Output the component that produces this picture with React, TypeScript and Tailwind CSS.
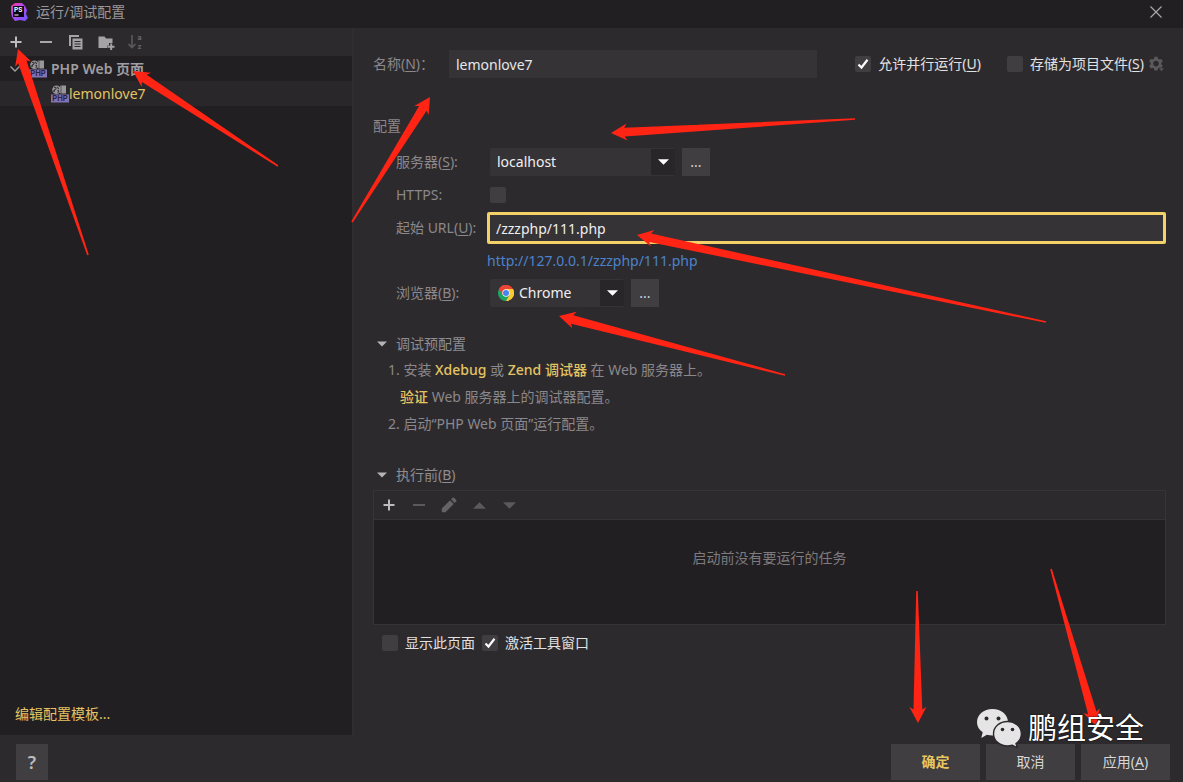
import React from "react";

type Point = [number, number];

const ARROWS: { from: Point; to: Point }[] = [
  { from: [88, 255], to: [18, 49] },
  { from: [278, 166], to: [133, 71] },
  { from: [352, 222], to: [430, 97] },
  { from: [855, 119], to: [611, 133] },
  { from: [1046, 322], to: [637, 235] },
  { from: [785, 375], to: [559, 316] },
  { from: [917, 591], to: [918, 723] },
  { from: [1051, 569], to: [1096, 726] },
];

function arrowPoints(from: Point, to: Point): string {
  const dx = to[0] - from[0];
  const dy = to[1] - from[1];
  const len = Math.hypot(dx, dy);
  const ux = dx / len;
  const uy = dy / len;
  const at = (back: number, side: number) =>
    `${(to[0] - ux * back - uy * side).toFixed(1)},${(to[1] - uy * back + ux * side).toFixed(1)}`;
  return [
    at(0, 0),
    at(16, 8.5),
    at(13.5, 4.4),
    at(len, 0.8),
    at(len, -0.8),
    at(13.5, -4.4),
    at(16, -8.5),
  ].join(" ");
}

function Arrows() {
  return (
    <svg
      className="pointer-events-none absolute left-0 top-0"
      width="1183"
      height="782"
      viewBox="0 0 1183 782"
      aria-hidden="true"
    >
      {ARROWS.map((a, i) => (
        <polygon key={i} points={arrowPoints(a.from, a.to)} fill="#ff2414" />
      ))}
    </svg>
  );
}

function AppIcon() {
  return (
    <svg width="20" height="20" viewBox="0 0 20 20" aria-hidden="true">
      <defs>
        <linearGradient id="psg" x1="0" y1="0" x2="1" y2="1">
          <stop offset="0" stopColor="#ff318c" />
          <stop offset="0.4" stopColor="#b74af7" />
          <stop offset="1" stopColor="#6b57ff" />
        </linearGradient>
      </defs>
      <path d="M2 4 6 1h7l3 3 2 4-1 4 2 4-3 3-5-1-5 1-3-4-1-5z" fill="url(#psg)" />
      <rect x="4" y="4" width="11" height="11" fill="#0a0410" />
      <text x="5" y="10" fontSize="6.5" fontWeight="700" fill="#fff" fontFamily="Inter, sans-serif">
        PS
      </text>
      <rect x="5.5" y="12.500" width="4" height="1" fill="#fff" />
    </svg>
  );
}

function PhpIcon() {
  return (
    <svg className="shrink-0" width="18" height="18" viewBox="0 0 18 18" aria-hidden="true">
      <circle cx="5.5" cy="4.8" r="4.3" fill="#98969a" />
      <path d="M3 2.6c1.4-.9 2.6.2 2 1.2-.6 1-1.8.6-1.6 2 .2 1-1 .6-1.4-.4M6.8 1.8c-.4 1 .2 1.6 1.2 1.8M6.4 5.4c.8-.4 1.6.2 1.2 1.2l-1 1" stroke="#353238" strokeWidth="1.1" fill="none" />
      <rect x="9" y="0.5" width="2.4" height="8" fill="#77757a" />
      <rect x="11" y="0.5" width="4" height="8" fill="#98969a" />
      <rect x="0" y="9.5" width="18" height="8" fill="#8273b4" />
      <text x="9" y="16.2" textAnchor="middle" fontSize="7.5" fontWeight="700" fill="#2b2442" fontFamily="Inter, sans-serif">
        PHP
      </text>
    </svg>
  );
}

function ChromeIcon() {
  return (
    <svg width="16" height="16" viewBox="0 0 48 48" aria-hidden="true">
      <path d="M24 24 3.2 12A24 24 0 0 1 44.8 12z" fill="#e94435" />
      <path d="M24 24 44.8 12A24 24 0 0 1 24 48z" fill="#fcc934" />
      <path d="M24 24v24A24 24 0 0 1 3.2 12z" fill="#1ea362" />
      <path d="M24 12h20.800A24 24 0 0 1 24 48l10.400-18z" fill="#fcc934" />
      <path d="M3.200 12 13.600 30 24 48 34.400 30H24z" fill="#1ea362" />
      <path d="M3.200 12 13.600 30 24 12h20.800A24 24 0 0 0 3.200 12z" fill="#e94435" />
      <circle cx="24" cy="24" r="11" fill="#fff" />
      <circle cx="24" cy="24" r="9" fill="#4285f4" />
    </svg>
  );
}

function PlusIcon() {
  return (
    <svg width="16" height="16" viewBox="0 0 16 16" aria-hidden="true">
      <path d="M8 2.500v11M2.500 8h11" stroke="#bdbbbd" strokeWidth="2" />
    </svg>
  );
}

function MinusIcon({ dim = false }: { dim?: boolean }) {
  return (
    <svg width="16" height="16" viewBox="0 0 16 16" aria-hidden="true">
      <path d="M2 8h12" stroke={dim ? "#5b595c" : "#a9a7aa"} strokeWidth="2" />
    </svg>
  );
}

function Triangle({ up = false, className }: { up?: boolean; className: string }) {
  return (
    <svg className={className} viewBox="0 0 12 6" aria-hidden="true">
      <path d={up ? "M0 6 6 0l6 6z" : "M0 0h12L6 6z"} fill="currentColor" />
    </svg>
  );
}

function ToolButton({ label, children }: { label: string; children: React.ReactNode }) {
  return (
    <button type="button" aria-label={label} className="flex size-5 items-center justify-center">
      {children}
    </button>
  );
}

function Check({
  id,
  checked = false,
  children,
}: {
  id: string;
  checked?: boolean;
  children?: React.ReactNode;
}) {
  return (
    <div className="flex items-center gap-[7px]">
      <span className="grid">
        <input
          id={id}
          type="checkbox"
          defaultChecked={checked}
          className="peer col-start-1 row-start-1 size-4 appearance-none rounded-xs bg-[#403e41]"
        />
        <svg
          className="pointer-events-none invisible col-start-1 row-start-1 size-4 peer-checked:visible"
          viewBox="0 0 16 16"
          aria-hidden="true"
        >
          <path d="M3.500 8.500 6.500 11.500 12.500 3.800" stroke="#fcfcfa" strokeWidth="2.200" fill="none" />
        </svg>
      </span>
      {children && (
        <label htmlFor={id} className="text-[#e2e1e2]">
          {children}
        </label>
      )}
    </div>
  );
}

function Combo({
  id,
  value,
  icon,
  className,
}: {
  id: string;
  value: string;
  icon?: React.ReactNode;
  className: string;
}) {
  return (
    <div className={`grid ${className}`}>
      <select
        id={id}
        defaultValue={value}
        className={`col-start-1 row-start-1 h-7 w-full appearance-none rounded-xs bg-[#363337] text-[#f0eff0] ${
          icon ? "pl-[29px]" : "pl-[7px]"
        }`}
      >
        <option>{value}</option>
      </select>
      <span className="pointer-events-none col-start-1 row-start-1 flex items-center justify-between pl-2">
        <span>{icon}</span>
        <span className="flex h-[26px] w-6 items-center justify-center bg-[#29262a] text-white">
          <Triangle className="h-[6px] w-[11px]" />
        </span>
      </span>
    </div>
  );
}

function MoreButton({ label }: { label: string }) {
  return (
    <button type="button" aria-label={label} className="h-7 w-7 bg-[#403e41] text-[#d4d3d4]">
      ...
    </button>
  );
}

function FootButton({ accent = false, children }: { accent?: boolean; children: React.ReactNode }) {
  return (
    <button
      type="button"
      className={`h-9 w-[89px] bg-[#403e41] ${accent ? "font-bold text-[#e9c75f]" : "text-[#d8d7d8]"}`}
    >
      {children}
    </button>
  );
}

function Sidebar() {
  return (
    <aside className="flex w-[354px] shrink-0 flex-col border-r-2 border-[#302d31] bg-[#221f22]">
      <div className="flex h-7 items-center gap-[10px] bg-[#2d2a2e] pl-[6px]">
        <ToolButton label="添加">
          <PlusIcon />
        </ToolButton>
        <ToolButton label="移除">
          <MinusIcon />
        </ToolButton>
        <ToolButton label="复制">
          <svg width="16" height="16" viewBox="0 0 16 16" aria-hidden="true">
            <path d="M1 12V1h10v2H3v9z" fill="#a5a3a6" />
            <path d="M4.500 4.500h10V15.500h-10z" fill="#a5a3a6" />
            <path d="M6.500 7.500h6M6.500 10h6M6.500 12.500h6" stroke="#2d2a2e" strokeWidth="1.100" />
          </svg>
        </ToolButton>
        <ToolButton label="新建文件夹">
          <svg width="17" height="16" viewBox="0 0 17 16" aria-hidden="true">
            <path d="M.5 2.500h6l1.500 2h6.500V9H11v2.500H9.500V14H.5z" fill="#a5a3a6" />
            <path d="M13.200 9.500v6.500M10 12.800h6.500" stroke="#a5a3a6" strokeWidth="1.900" />
          </svg>
        </ToolButton>
        <ToolButton label="排序">
          <svg width="16" height="20" viewBox="0 0 16 20" aria-hidden="true">
            <path d="M4 3v12.500M.5 12 4 15.500 7.500 12" stroke="#5b595c" strokeWidth="1.600" fill="none" />
            <text x="9.500" y="7.500" fontSize="7" fontWeight="700" fill="#6a686b" fontFamily="Inter, sans-serif">a</text>
            <text x="9.500" y="16.500" fontSize="7" fontWeight="700" fill="#6a686b" fontFamily="Inter, sans-serif">z</text>
          </svg>
        </ToolButton>
      </div>
      <ul>
        <li className="flex h-[25px] items-center gap-1 pl-[9px] font-semibold text-[#a09ea1]">
          <svg width="12" height="12" viewBox="0 0 12 12" aria-hidden="true">
            <path d="m1.500 3.500 4.500 4.500 4.500-4.500" stroke="#a09ea1" strokeWidth="1.400" fill="none" />
          </svg>
          <span className="pl-1">
            <PhpIcon />
          </span>
          PHP Web 页面
        </li>
        <li className="flex h-[25px] items-center bg-[#2a272b] pl-[51px] text-[#e3c462]">
          <PhpIcon />
          lemonlove7
        </li>
      </ul>
      <a href="#templates" className="mt-auto pb-[11px] pl-[15px] leading-5 text-[#e3c462]">
        编辑配置模板...
      </a>
    </aside>
  );
}

function SectionTitle({ className, children }: { className: string; children: React.ReactNode }) {
  return (
    <h2 className={`flex h-5 items-center gap-[9px] pl-1 text-[#8f8d90] ${className}`}>
      <Triangle className="h-[6px] w-[10px] text-[#b5b3b6]" />
      {children}
    </h2>
  );
}

function Watermark() {
  return (
    <div className="pointer-events-none absolute right-[39px] bottom-[34px] flex items-center gap-[6px]">
      <svg width="46" height="40" viewBox="0 0 46 40" aria-hidden="true">
        <path
          d="M16.500 1C7.700 1 1 6.800 1 14.200c0 4.200 2.200 7.700 5.700 10.100L5.300 30l5.600-3.200c1.800.5 3.700.8 5.600.8C25.300 27.600 32 21.600 32 14.200S25.300 1 16.500 1z"
          fill="#e6e5e6"
        />
        <path
          d="M31.500 13.500c-7.800 0-14 5.400-14 12.200s6.200 12.300 14 12.300c1.700 0 3.300-.3 4.800-.7l5 2.500-1.300-4.300c3.300-2.200 5.400-5.600 5.400-9.700 0-6.900-6.200-12.300-13.900-12.300z"
          fill="#e6e5e6"
          stroke="#2d2a2e"
          strokeWidth="1.400"
        />
        <circle cx="10.500" cy="10.500" r="2" fill="#2d2a2e" />
        <circle cx="22.500" cy="10.500" r="2" fill="#2d2a2e" />
        <circle cx="26.500" cy="21.500" r="1.800" fill="#2d2a2e" />
        <circle cx="36.500" cy="21.500" r="1.800" fill="#2d2a2e" />
      </svg>
      <span className="text-[29px] leading-10 text-white text-shadow-[0_0_2px_#000]">鹏组安全</span>
    </div>
  );
}

export default function App() {
  return (
    <div className="relative flex min-h-screen flex-col overflow-hidden bg-[#2d2a2e] font-['Noto_Sans','Noto_Sans_CJK_SC',sans-serif] text-[14px] leading-5 text-[#8a888b] [&_u]:underline-offset-2">
      <header className="flex h-7 items-center bg-[#221f22] pr-5 pb-1 pl-[9px]">
        <AppIcon />
        <h1 className="pl-[7px] text-[#98969a]">运行/调试配置</h1>
        <button type="button" aria-label="关闭" className="ml-auto">
          <svg width="14" height="14" viewBox="0 0 14 14" aria-hidden="true">
            <path d="m1.500 1.500 11 11m0-11-11 11" stroke="#a9a7aa" strokeWidth="1.200" />
          </svg>
        </button>
      </header>

      <div className="flex flex-1">
        <Sidebar />
        <main className="min-w-0 flex-1 pt-[22px] pr-[17px] pl-[19px]">
          <div className="flex h-7 items-center">
            <label htmlFor="name" className="w-[76px]">
              名称(<u>N</u>)：
            </label>
            <input
              id="name"
              defaultValue="lemonlove7"
              className="h-7 w-[368px] bg-[#363337] px-[7px] text-[#e8e7e8]"
            />
            <div className="ml-auto flex items-center gap-[26px]">
              <Check id="parallel" checked>
                允许并行运行(<u>U</u>)
              </Check>
              <div className="flex items-center gap-1">
                <Check id="store">
                  存储为项目文件(<u>S</u>)
                </Check>
                <svg width="18" height="16" viewBox="0 0 18 16" aria-hidden="true">
                  <path
                    d="M6.500.8h3l.4 2 1.500.8 1.900-.7 1.500 2.600-1.500 1.300v1.700l1.500 1.300-1.500 2.600-1.900-.7-1.500.8-.4 2h-3l-.4-2-1.500-.8-1.900.7-1.500-2.600 1.500-1.300V6.800L1.200 5.500l1.500-2.600 1.900.7 1.500-.8z"
                    fill="#5b595c"
                  />
                  <circle cx="8" cy="7.600" r="2.800" fill="#2d2a2e" />
                  <path d="M10.500 12h6l-3 3.500z" fill="#5b595c" stroke="#2d2a2e" strokeWidth=".6" />
                </svg>
              </div>
            </div>
          </div>

          <h2 className="mt-[38px]">配置</h2>

          <div className="pl-[23px]">
            <div className="mt-3 flex h-7 items-center">
              <label htmlFor="server" className="w-[94px]">
                服务器(<u>S</u>):
              </label>
              <Combo id="server" value="localhost" className="mr-[7px] w-[185px]" />
              <MoreButton label="服务器设置" />
            </div>
            <div className="mt-2 flex h-[22px] items-center">
              <label htmlFor="https" className="w-[94px]">
                HTTPS:
              </label>
              <Check id="https" />
            </div>
            <div className="mt-[6px] flex h-8 items-center">
              <label htmlFor="url" className="w-[91px] whitespace-nowrap">
                起始 URL(<u>U</u>):
              </label>
              <input
                id="url"
                defaultValue="/zzzphp/111.php"
                className="h-8 min-w-0 flex-1 rounded-xs border-3 border-[#f4d068] bg-[#363337] px-[6px] text-[#f0eff0]"
              />
            </div>
            <a href="#preview" className="mt-[7px] block h-5 w-fit pl-[91px] text-[#4b83cb]">
              http://127.0.0.1/zzzphp/111.php
            </a>
            <div className="mt-2 flex h-7 items-center">
              <label htmlFor="browser" className="w-[94px]">
                浏览器(<u>B</u>):
              </label>
              <Combo id="browser" value="Chrome" icon={<ChromeIcon />} className="mr-[7px] w-[134px]" />
              <MoreButton label="浏览器设置" />
            </div>
          </div>

          <SectionTitle className="mt-[27px]">调试预配置</SectionTitle>
          <div className="mt-[2px] pl-[15px] leading-[27px]">
            <p>
              1. 安装{" "}
              <a href="#xdebug" className="font-medium text-[#e3c462]">
                Xdebug
              </a>{" "}
              或{" "}
              <a href="#zend" className="font-medium text-[#e3c462]">
                Zend 调试器
              </a>{" "}
              在 Web 服务器上。
            </p>
            <p className="pl-3">
              <a href="#validate" className="font-medium text-[#e3c462]">
                验证
              </a>{" "}
              Web 服务器上的调试器配置。
            </p>
            <p>2. 启动“PHP Web 页面”运行配置。</p>
          </div>

          <SectionTitle className="mt-7">
            <span>
              执行前(<u>B</u>)
            </span>
          </SectionTitle>
          <div className="mt-[5px] border border-[#373438]">
            <div className="flex h-[29px] items-center gap-[10px] border-b border-[#373438] pl-[5px]">
              <ToolButton label="添加任务">
                <PlusIcon />
              </ToolButton>
              <ToolButton label="移除任务">
                <MinusIcon dim />
              </ToolButton>
              <ToolButton label="编辑任务">
                <svg width="16" height="16" viewBox="0 0 16 16" aria-hidden="true">
                  <path d="M.8 15.200V11.500L9 3.300 12.700 7l-8.200 8.200zM10 2.300 11.500.8q.8-.6 1.600 0l2.100 2.100q.6.800 0 1.600L13.700 6z" fill="#656366" />
                </svg>
              </ToolButton>
              <ToolButton label="上移">
                <Triangle up className="h-[7px] w-[13px] text-[#5b595c]" />
              </ToolButton>
              <ToolButton label="下移">
                <Triangle className="h-[7px] w-[13px] text-[#5b595c]" />
              </ToolButton>
            </div>
            <p className="h-[104px] bg-[#221f22] pt-7 text-center text-[#7d7b7e]">启动前没有要运行的任务</p>
          </div>
          <div className="mt-2 flex h-5 items-center gap-[7px] pl-[9px]">
            <Check id="show">显示此页面</Check>
            <Check id="activate" checked>
              激活工具窗口
            </Check>
          </div>
        </main>
      </div>

      <footer className="flex h-[47px] items-center gap-[6px] pt-[7px] pr-[13px] pl-4">
        <button type="button" aria-label="帮助" className="mr-auto h-9 w-8 bg-[#403e41] text-[18px] font-semibold text-[#bdbbbd]">
          ?
        </button>
        <FootButton accent>确定</FootButton>
        <FootButton>取消</FootButton>
        <FootButton>
          应用(<u>A</u>)
        </FootButton>
      </footer>

      <Arrows />
      <Watermark />
    </div>
  );
}
